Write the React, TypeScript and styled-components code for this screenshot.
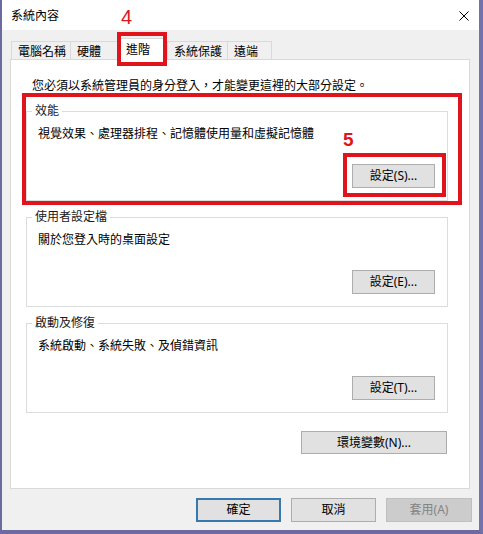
import React from "react";
import styled, { createGlobalStyle } from "styled-components";

const GlobalStyle = createGlobalStyle`
  html, body { margin: 0; padding: 0; background: #ffffff; }
  * { box-sizing: border-box; }
`;

const FONT = `"Noto Sans", "Noto Sans CJK TC", sans-serif`;
const RED = "#e0141c";

const Window = styled.div`
  width: 483px;
  height: 534px;
  display: flex;
  flex-direction: column;
  background: #f0f0f0;
  border-left: 2px solid #6c6a9f;
  border-right: 4px solid #7472ac;
  border-bottom: 4px solid #6c6a9f;
  font-family: ${FONT};
  font-size: 12px;
  color: #000;
`;

const TitleBar = styled.div`
  height: 30px;
  flex: none;
  background: #ffffff;
  display: flex;
  align-items: center;
  justify-content: space-between;
  padding: 1px 10px 0 9px;
`;

const Title = styled.span`
  line-height: 16px;
  color: #000;
`;

const CloseIcon = styled.svg`
  width: 10px;
  height: 10px;
  display: block;
`;

const Body = styled.div`
  flex: 1;
  display: flex;
  flex-direction: column;
  padding: 8px 7px 8px 8px;
  min-height: 0;
`;

const TabStrip = styled.div`
  height: 21px;
  flex: none;
  display: flex;
  align-items: flex-end;
  margin-left: 1px;
  position: relative;
  z-index: 2;
`;

const Tab = styled.div<{ $w: number; $active?: boolean; $last?: boolean }>`
  position: relative;
  width: ${(p) => p.$w}px;
  height: ${(p) => (p.$active ? 22 : 18)}px;
  margin-bottom: ${(p) => (p.$active ? -1 : 0)}px;
  padding: ${(p) => (p.$active ? "3px 0 0 8px" : "2px 0 0 6px")};
  line-height: 16px;
  white-space: nowrap;
  background: ${(p) => (p.$active ? "#ffffff" : "#f0f0f0")};
  border: 1px solid #d9d9d9;
  border-bottom: none;
  border-right: ${(p) => (p.$active || p.$last ? "1px solid #d9d9d9" : "none")};
`;

const RedFrame = styled.div<{ $t: number; $r: number; $b: number; $l: number }>`
  position: absolute;
  top: ${(p) => p.$t}px;
  right: ${(p) => p.$r}px;
  bottom: ${(p) => p.$b}px;
  left: ${(p) => p.$l}px;
  border: 4px solid ${RED};
  pointer-events: none;
  z-index: 5;
`;

const StepLabel = styled.span<{ $t: number; $l: number; $bold?: boolean; $size: number }>`
  position: absolute;
  top: ${(p) => p.$t}px;
  left: ${(p) => p.$l}px;
  font-family: "Liberation Sans", sans-serif;
  font-size: ${(p) => p.$size}px;
  line-height: ${(p) => p.$size}px;
  font-weight: ${(p) => (p.$bold ? 700 : 400)};
  color: ${RED};
  z-index: 5;
`;

const Panel = styled.div`
  flex: 1;
  display: flex;
  flex-direction: column;
  background: #ffffff;
  border: 1px solid #d9d9d9;
  margin-right: 2px;
  padding: 18px 21px 0 15px;
  position: relative;
  z-index: 1;
`;

const Info = styled.div`
  margin-left: 6px;
  line-height: 16px;
`;

const Groups = styled.div`
  margin-top: 9px;
  display: flex;
  flex-direction: column;
  gap: 8px;
`;

const GroupWrap = styled.div`
  position: relative;
`;

const Group = styled.fieldset`
  margin: 0;
  padding: 0 12px 12px 5px;
  border: 1px solid #dcdcdc;
  min-width: 0;
`;

const Legend = styled.legend`
  padding: 0 3px;
  line-height: 16px;
  color: #1a1a1a;
`;

const Desc = styled.div`
  margin: 7px 0 0 6px;
  line-height: 16px;
`;

const ButtonRow = styled.div<{ $mt: number; $mr?: number }>`
  display: flex;
  justify-content: flex-end;
  margin-top: ${(p) => p.$mt}px;
  margin-right: ${(p) => p.$mr ?? 0}px;
`;

const Annotated = styled.span`
  position: relative;
  display: inline-flex;
`;

const Button = styled.button<{ $w: number; $h?: number; $variant?: "default" | "disabled" }>`
  width: ${(p) => p.$w}px;
  height: ${(p) => p.$h ?? 24}px;
  margin: 0;
  padding: 0;
  font-family: ${FONT};
  font-size: 12px;
  line-height: 16px;
  color: ${(p) => (p.$variant === "disabled" ? "#838383" : "#000")};
  background: ${(p) => (p.$variant === "disabled" ? "#cccccc" : "#e1e1e1")};
  border: ${(p) =>
    p.$variant === "default"
      ? "2px solid #3778ae"
      : p.$variant === "disabled"
      ? "1px solid #bfbfbf"
      : "1px solid #adadad"};
  border-radius: 0;
  display: flex;
  align-items: center;
  justify-content: center;
`;

const Footer = styled.div`
  flex: none;
  display: flex;
  justify-content: flex-end;
  gap: 10px;
  margin-top: 9px;
`;

export default function App() {
  return (
    <>
      <GlobalStyle />
      <Window>
        <TitleBar>
          <Title>系統內容</Title>
          <CloseIcon viewBox="0 0 10 10">
            <path d="M0.5 0.5 L9.5 9.5 M9.5 0.5 L0.5 9.5" stroke="#000" strokeWidth="1" fill="none" />
          </CloseIcon>
        </TitleBar>
        <Body>
          <TabStrip>
            <Tab $w={59}>電腦名稱</Tab>
            <Tab $w={47}>硬體</Tab>
            <Tab $w={50} $active>
              進階
              <RedFrame $t={-7} $r={-1} $b={-6} $l={-1} />
              <StepLabel $t={-32} $l={3} $size={20}>4</StepLabel>
            </Tab>
            <Tab $w={60}>系統保護</Tab>
            <Tab $w={45} $last>遠端</Tab>
          </TabStrip>
          <Panel>
            <Info>您必須以系統管理員的身分登入，才能變更這裡的大部分設定。</Info>
            <Groups>
              <GroupWrap>
                <Group>
                  <Legend>效能</Legend>
                  <Desc>視覺效果、處理器排程、記憶體使用量和虛擬記憶體</Desc>
                  <ButtonRow $mt={22}>
                    <Annotated>
                      <Button $w={83}>設定(S)...</Button>
                      <RedFrame $t={-11} $r={-11} $b={-9} $l={-9} />
                      <StepLabel $t={-34} $l={-9} $size={19} $bold>5</StepLabel>
                    </Annotated>
                  </ButtonRow>
                </Group>
                <RedFrame $t={-10} $r={-14} $b={-4} $l={-4} />
              </GroupWrap>
              <GroupWrap>
                <Group>
                  <Legend>使用者設定檔</Legend>
                  <Desc>關於您登入時的桌面設定</Desc>
                  <ButtonRow $mt={22}>
                    <Button $w={83}>設定(E)...</Button>
                  </ButtonRow>
                </Group>
              </GroupWrap>
              <GroupWrap>
                <Group>
                  <Legend>啟動及修復</Legend>
                  <Desc>系統啟動、系統失敗、及偵錯資訊</Desc>
                  <ButtonRow $mt={22}>
                    <Button $w={83}>設定(T)...</Button>
                  </ButtonRow>
                </Group>
              </GroupWrap>
            </Groups>
            <ButtonRow $mt={18} $mr={1}>
              <Button $w={146} $h={23}>環境變數(N)...</Button>
            </ButtonRow>
          </Panel>
          <Footer>
            <Button $w={85} $variant="default">確定</Button>
            <Button $w={85}>取消</Button>
            <Button $w={86} $variant="disabled">套用(A)</Button>
          </Footer>
        </Body>
      </Window>
    </>
  );
}
